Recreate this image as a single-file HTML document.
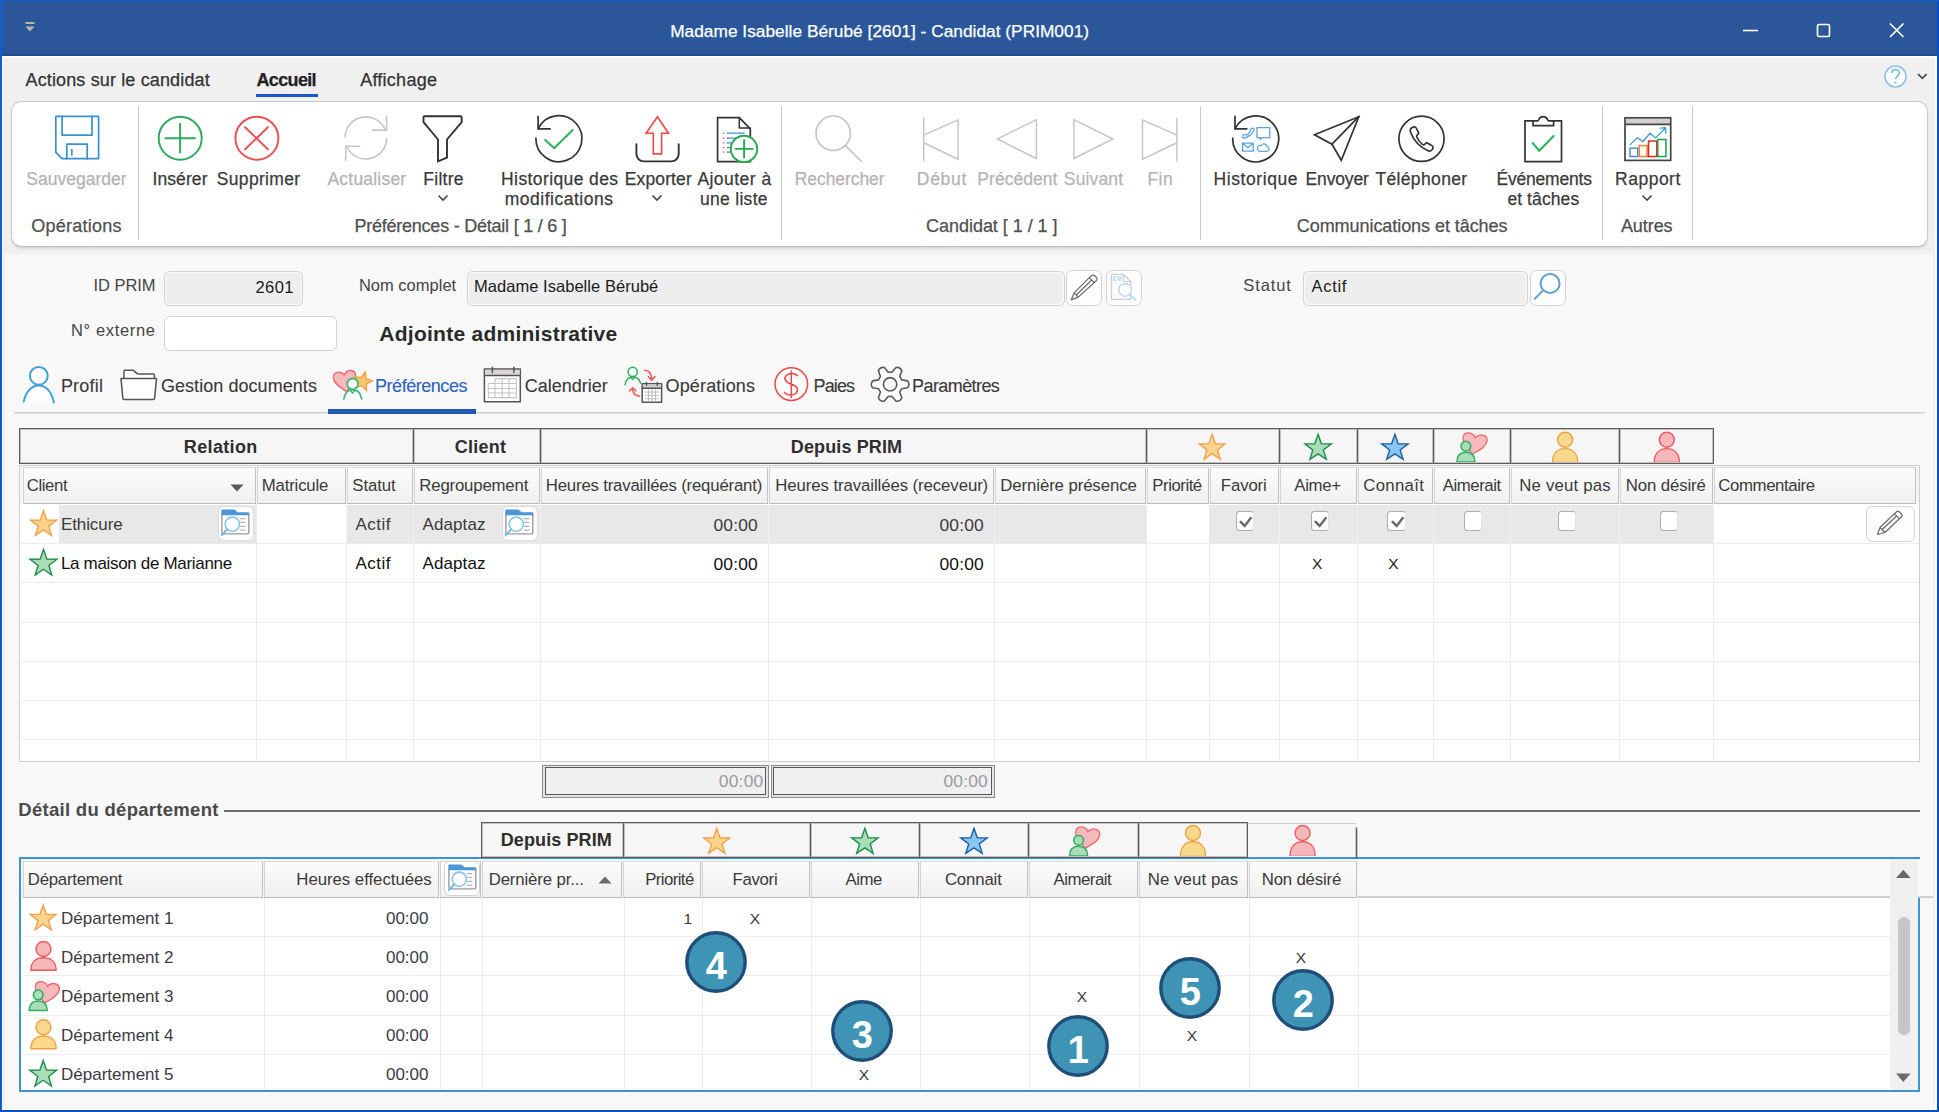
<!DOCTYPE html>
<html lang="fr">
<head>
<meta charset="utf-8">
<title>Madame Isabelle Bérubé [2601] - Candidat (PRIM001)</title>
<style>
*{box-sizing:border-box;margin:0;padding:0}
html,body{width:1939px;height:1112px;overflow:hidden;background:#f8f8f8}
body{font-family:"Liberation Sans",sans-serif;color:#333;position:relative}
.a{position:absolute}
.t{position:absolute;white-space:nowrap;line-height:20px;height:20px}
.c{text-align:center}
.r{text-align:right}
/* window chrome */
#win{position:absolute;left:0;top:0;width:1939px;height:1112px;background:#f8f8f8}
#titlebar{position:absolute;left:0;top:0;width:1939px;height:56px;background:#2b579a;border-bottom:2px solid #1f4b8f}
#tabsbar{position:absolute;left:0;top:56px;width:1939px;height:198px;background:#f0f0f0;border-top:2px solid #fffefb}
#bl{position:absolute;left:0;top:0;width:1.500px;height:1112px;background:#0b5fce}
#br{position:absolute;left:1937px;top:0;width:2px;height:1112px;background:#0a50c6}
#bt{position:absolute;left:0;top:0;width:1939px;height:1px;background:#0b5fce}
#bb{position:absolute;left:0;top:1110px;width:1939px;height:2px;background:#0a50c6}
.cr{position:absolute;background:#fffdf7}
#title{left:559.500px;top:21.400px;width:640px;font-size:17.300px;color:#fff}
/* ribbon */
#ribbon{position:absolute;left:10.700px;top:101.300px;width:1917.200px;height:146px;background:#fff;border:1.500px solid #cbcbcb;border-bottom-color:#bfbfbf;border-radius:10.500px;box-shadow:0 1.500px 2px rgba(0,0,0,.10)}
.rt{font-size:18px;color:#333;top:69.500px;letter-spacing:.08px}
.sep{position:absolute;top:106px;width:1px;height:134px;background:#c9c9c9}
.bl{font-size:17.500px;color:#3a3a3a;top:168.700px;width:200px;margin-left:-100px}
.bl2{top:188.500px}
.rt,.bl,.gl,#title{-webkit-text-stroke:.25px currentColor}
.pt{-webkit-text-stroke:.12px currentColor}
.dis{color:#b4b4b4}
.gl{font-size:18px;color:#505050;top:216.400px;width:400px;margin-left:-200px}
/* form */
.fl{font-size:16.5px;color:#444}
.inp{position:absolute;height:35px;border:1.200px solid #d2d2d2;border-radius:5.500px;background:#eeeeee;box-shadow:inset 0 0 0 1.200px rgba(255,255,255,.7)}
.btn{position:absolute;width:36px;height:36px;border:1.200px solid #d2d2d2;border-radius:6.500px;background:#fdfdfd}
.ft{font-size:16.5px;color:#1a1a1a}
.pt{font-size:18px;color:#3a3a3a;top:375.500px;letter-spacing:.1px}
/* grid */
.gt{font-size:16.800px;color:#3a3a3a;letter-spacing:-.25px}
.gb{font-size:18px;font-weight:bold;color:#2e2e2e;letter-spacing:.1px}
.gc{font-size:17px;color:#1d1d1d;letter-spacing:-.2px}
.vl{position:absolute;width:1px;background:#ececec}
.hl{position:absolute;height:1px;background:#ececec}
.hc{position:absolute;border-right:1px solid #c9c9c9;border-left:1px solid #fff}
</style>
</head>
<body>
<div id="win">
<div id="titlebar"></div>
<div id="tabsbar"></div>
<div class="t c" id="title" style="top:21.400px;left:670.2px;width:auto;margin-left:0;text-align:left;letter-spacing:0.02px">Madame Isabelle Bérubé [2601] - Candidat (PRIM001)</div>
<svg class="a" style="left:24px;top:19px" width="12" height="16" viewBox="0 0 12 16"><rect x="1.5" y="3" width="9" height="2" fill="#b9b5ae"/><path d="M1.5 7.5h9L6 12.5z" fill="#b9b5ae"/></svg>
<svg class="a" style="left:1735px;top:18px" width="180" height="26" viewBox="0 0 180 26"><g stroke="#fff" stroke-width="1.6" fill="none"><path d="M8 12.5h15"/><rect x="82.5" y="6.5" width="12" height="12" rx="1.5"/><path d="M155 5.5l13.5 13.5M168.5 5.5L155 19"/></g></svg>
<div class="t rt" style="left:26px;left:25.5px;width:auto;margin-left:0;text-align:left;letter-spacing:0.14px">Actions sur le candidat</div>
<div class="t rt" style="left:258px;font-weight:bold;color:#222;left:256.5px;width:auto;margin-left:0;text-align:left;letter-spacing:-0.66px">Accueil</div>
<div class="a" style="left:256px;top:94px;width:62px;height:3px;background:#1857c4"></div>
<div class="t rt" style="left:360px;left:360.2px;width:auto;margin-left:0;text-align:left;letter-spacing:0.25px">Affichage</div>
<svg class="a" style="left:1880px;top:62px" width="56" height="30" viewBox="0 0 56 30"><circle cx="15.5" cy="14.5" r="10.5" fill="#fff" stroke="#8cc3e8" stroke-width="1.6"/><path d="M11.8 11.2c0-5 7.6-5 7.6-.4 0 3.2-3.8 3-3.8 6.4" fill="none" stroke="#6fb1e0" stroke-width="1.5"/><circle cx="15.6" cy="20.6" r="1" fill="#6fb1e0"/><path d="M38 12l4.3 4.3L46.600 12" fill="none" stroke="#444" stroke-width="1.7"/></svg>

<div id="ribbon"></div>
<div class="sep" style="left:138px"></div>
<div class="sep" style="left:781px"></div>
<div class="sep" style="left:1200px"></div>
<div class="sep" style="left:1602px"></div>
<div class="sep" style="left:1692px"></div>
<!-- labels -->
<div class="t c bl dis" style="left:76px;left:26.2px;width:auto;margin-left:0;text-align:left;letter-spacing:0.02px">Sauvegarder</div>
<div class="t c bl" style="left:180px;left:152.5px;width:auto;margin-left:0;text-align:left;letter-spacing:0.09px">Insérer</div>
<div class="t c bl" style="left:258px;left:216.8px;width:auto;margin-left:0;text-align:left;letter-spacing:0.32px">Supprimer</div>
<div class="t c bl dis" style="left:367px;left:327.5px;width:auto;margin-left:0;text-align:left;letter-spacing:0.20px">Actualiser</div>
<div class="t c bl" style="left:443px;left:423.3px;width:auto;margin-left:0;text-align:left;letter-spacing:0.27px">Filtre</div>
<div class="t c bl" style="left:559px;left:501.1px;width:auto;margin-left:0;text-align:left;letter-spacing:0.39px">Historique des</div>
<div class="t c bl bl2" style="left:559px;left:504.7px;width:auto;margin-left:0;text-align:left;letter-spacing:0.51px">modifications</div>
<div class="t c bl" style="left:658px;left:624.7px;width:auto;margin-left:0;text-align:left;letter-spacing:0.14px">Exporter</div>
<div class="t c bl" style="left:734px;left:697.4px;width:auto;margin-left:0;text-align:left;letter-spacing:0.46px">Ajouter à</div>
<div class="t c bl bl2" style="left:734px;left:699.9px;width:auto;margin-left:0;text-align:left;letter-spacing:0.31px">une liste</div>
<div class="t c bl dis" style="left:839px;left:794.8px;width:auto;margin-left:0;text-align:left;letter-spacing:-0.08px">Rechercher</div>
<div class="t c bl dis" style="left:941px;left:916.8px;width:auto;margin-left:0;text-align:left;letter-spacing:0.70px">Début</div>
<div class="t c bl dis" style="left:1017px;left:977.3px;width:auto;margin-left:0;text-align:left;letter-spacing:0.05px">Précédent</div>
<div class="t c bl dis" style="left:1092px;left:1063.8px;width:auto;margin-left:0;text-align:left;letter-spacing:0.16px">Suivant</div>
<div class="t c bl dis" style="left:1160px;left:1147.4px;width:auto;margin-left:0;text-align:left;letter-spacing:0.50px">Fin</div>
<div class="t c bl" style="left:1255px;left:1213.5px;width:auto;margin-left:0;text-align:left;letter-spacing:0.59px">Historique</div>
<div class="t c bl" style="left:1337px;left:1305.5px;width:auto;margin-left:0;text-align:left;letter-spacing:-0.13px">Envoyer</div>
<div class="t c bl" style="left:1421px;left:1375.4px;width:auto;margin-left:0;text-align:left;letter-spacing:0.36px">Téléphoner</div>
<div class="t c bl" style="left:1543px;left:1496.4px;width:auto;margin-left:0;text-align:left;letter-spacing:-0.18px">Événements</div>
<div class="t c bl bl2" style="left:1543px;left:1507.4px;width:auto;margin-left:0;text-align:left;letter-spacing:0.09px">et tâches</div>
<div class="t c bl" style="left:1647px;left:1615.0px;width:auto;margin-left:0;text-align:left;letter-spacing:0.51px">Rapport</div>
<!-- group labels -->
<div class="t c gl" style="left:76px;left:31.2px;width:auto;margin-left:0;text-align:left;letter-spacing:0.24px">Opérations</div>
<div class="t c gl" style="left:460px;left:354.4px;width:auto;margin-left:0;text-align:left;letter-spacing:-0.23px">Préférences - Détail [ 1 / 6 ]</div>
<div class="t c gl" style="left:991px;left:926.1px;width:auto;margin-left:0;text-align:left;letter-spacing:-0.04px">Candidat [ 1 / 1 ]</div>
<div class="t c gl" style="left:1401px;left:1296.8px;width:auto;margin-left:0;text-align:left;letter-spacing:-0.06px">Communications et tâches</div>
<div class="t c gl" style="left:1647px;left:1620.9px;width:auto;margin-left:0;text-align:left;letter-spacing:-0.06px">Autres</div>
<!-- chevrons -->
<svg class="a" style="left:436px;top:193px" width="14" height="10" viewBox="0 0 14 10"><path d="M2.5 2.5L7 7l4.500-4.500" fill="none" stroke="#444" stroke-width="1.6"/></svg>
<svg class="a" style="left:650px;top:193px" width="14" height="10" viewBox="0 0 14 10"><path d="M2.5 2.5L7 7l4.500-4.500" fill="none" stroke="#444" stroke-width="1.6"/></svg>
<svg class="a" style="left:1640px;top:193px" width="14" height="10" viewBox="0 0 14 10"><path d="M2.5 2.5L7 7l4.500-4.500" fill="none" stroke="#444" stroke-width="1.6"/></svg>
<svg class="a" style="left:0;top:108px" width="1939" height="60" viewBox="0 108 1939 60" fill="none" stroke-linecap="round" stroke-linejoin="round">
<!-- save -->
<g stroke="#3b8fd1" stroke-width="1.700"><path d="M55.800 116.300H98.600V158.700H62.100L55.800 152.400Z"/><path d="M62.100 116.300V135.200H92V116.300"/><path d="M66.800 158.700V144.200H87.200V158.700"/><path d="M71.800 149.600V155"/></g>
<!-- insert -->
<g stroke="#2fa85a" stroke-width="1.900"><circle cx="180.200" cy="138.200" r="21.500"/><path d="M165.400 138.200H194.900M180.100 123.800V152.500"/></g>
<!-- delete -->
<g stroke="#e85050" stroke-width="1.900"><circle cx="256.900" cy="138.200" r="21.500"/><path d="M245.100 127.200L267.900 149.300M267.900 127.200L245.100 149.300"/></g>
<!-- refresh -->
<g stroke="#c6c6c6" stroke-width="1.600"><path d="M345 136.700A20.900 20.900 0 0 1 385.400 130.300"/><path d="M386.600 116V130.100H372.500"/><path d="M386.700 138.900A20.900 20.900 0 0 1 346.500 146"/><path d="M345.700 160.300V146.200H359.800"/></g>
<!-- filter -->
<g stroke="#333" stroke-width="1.900" stroke-linecap="butt" stroke-linejoin="miter"><path d="M424.500 116.300H460.700Q461.700 116.300 461.700 117.300V122.100L447 139.500V157.600L438 161.400V139.500L423.500 122.100V117.300Q423.500 116.300 424.500 116.300Z"/></g>
<!-- history check -->
<g stroke="#333" stroke-width="1.700"><path d="M538.100 128.800A23 23 0 1 1 535.900 138.200"/><path d="M538.100 116.300V128.800H550.200"/></g>
<path d="M545.200 139.900L554.200 148.200L572.600 130.100" stroke="#2db55d" stroke-width="2.100"/>
<!-- export -->
<path d="M636.400 144.200V154A7.400 7.400 0 0 0 643.800 161.400H671.300A7.400 7.400 0 0 0 678.700 154V144.200" stroke="#333" stroke-width="1.900"/>
<path d="M657.500 116.700L668.500 133.200H661.600V153.900H653.300V133.200H646.100Z" stroke="#f04848" stroke-width="1.600" stroke-linejoin="miter"/>
<!-- add to list -->
<path d="M717.600 117.700H739.300L750.300 128.800V161.600H717.600Z" stroke="#333" stroke-width="1.700" stroke-linejoin="miter"/>
<path d="M739.300 117.700V128.100H750.300" stroke="#333" stroke-width="1.500"/>
<g stroke="#3b8fd1" stroke-width="1.200" stroke-linecap="butt"><path d="M726.600 133.200H744.700M726.600 138.200H744.700M726.600 142.900H744.700M726.600 147.600H744.700M726.600 152.200H744.700"/></g>
<g stroke="#f04848" stroke-width="1.300" stroke-linecap="butt"><path d="M722.800 133.200h1.500M722.800 138.200h1.500M722.800 142.900h1.500M722.800 147.600h1.500M722.800 152.200h1.500"/></g>
<circle cx="744" cy="148.900" r="13.200" fill="#fff" stroke="#27a84f" stroke-width="1.900"/>
<path d="M735.600 148.900H752.700M744.100 140.200V157.600" stroke="#27a84f" stroke-width="1.900"/>
<!-- search -->
<g stroke="#c6c6c6" stroke-width="1.700"><circle cx="833.200" cy="133.200" r="17.200"/><path d="M845.900 146.200L861.300 161.400"/></g>
<!-- nav -->
<g stroke="#c6c6c6" stroke-width="1.500" stroke-linecap="butt" stroke-linejoin="miter">
<path d="M923.700 117.800V161.400M923.700 135.100L958.100 119.800V159.300L923.700 142.700"/>
<path d="M997.400 139L1036.400 119.600V158.500Z"/>
<path d="M1112.900 139L1073.900 119.600V158.500Z"/>
<path d="M1176.900 117.800V161.400M1176.900 135.100L1142.500 119.800V159.300L1176.900 142.700"/>
</g>
<!-- historique -->
<g stroke="#333" stroke-width="1.700"><path d="M1235 128.800A23 23 0 1 1 1232.700 138.200"/><path d="M1235 116.300V128.800H1246.800"/></g>
<g stroke="#5aa5dc" stroke-width="1.300"><path d="M1257 127.600H1269.800V137.600H1262.200L1260.200 139.600V137.600H1257Z"/><path d="M1242.600 143.200H1253.200V151.200H1242.600ZM1242.600 143.200L1247.900 147.800L1253.200 143.200"/><path d="M1259.600 151.400H1266.800A2.500 2.500 0 0 0 1267.200 146.500A3.300 3.300 0 0 0 1261.200 145.500A3 3 0 0 0 1259.600 151.400Z"/><path d="M1252 128.300Q1254.500 127.600 1254 130Q1251.500 135 1247 137.200Q1243 139.200 1242.400 136.500Q1242.400 134.400 1245 134.400Q1246.200 135.600 1247.500 134.500Q1250 132.600 1250.500 130Q1250.500 128.800 1252 128.300Z"/></g>
<!-- envoyer -->
<g stroke="#333" stroke-width="1.700" stroke-linejoin="miter"><path d="M1314.500 134.800L1358.800 116.700L1341.300 160.300L1332 144.200Z"/><path d="M1332 144.200L1358.800 116.700"/></g>
<!-- telephoner -->
<g stroke="#333" stroke-width="1.700"><circle cx="1421.500" cy="138.800" r="22.600"/><path d="M1412.200 127.400C1410.200 128.400 1409.800 130.200 1410.800 132.800C1413.800 140.600 1419.600 146.800 1427.600 150.600C1429.600 151.600 1431.200 151.200 1432.400 149.400C1433.600 147.600 1433.200 146.400 1431.600 145.400L1428.200 143.400C1426.800 142.600 1425.800 143 1425 144C1424.200 145 1423.400 145.200 1422.400 144.400C1419.800 142.200 1418 139.800 1416.800 137C1416.400 136 1416.800 135.200 1417.600 134.600C1418.600 134 1418.800 133 1418.200 131.800L1416.400 128.400C1415.600 126.800 1414 126.400 1412.200 127.400Z"/></g>
<!-- evenements -->
<g stroke="#333" stroke-width="1.700" stroke-linejoin="miter"><path d="M1533 120.900H1525V161.600H1561.500V120.900H1553.600"/><path d="M1533 120.900V125.700H1553.600V120.900H1549Q1548 120.900 1547.600 119.800A4.700 4.700 0 0 0 1538.700 119.800Q1538.300 120.900 1537.300 120.900Z"/></g>
<path d="M1532.800 143.100L1539.200 150.800L1553.600 136.100" stroke="#2db55d" stroke-width="2.200"/>
<!-- rapport -->
<rect x="1625.800" y="118.600" width="44" height="5.700" fill="#d3cfcb" stroke="none"/>
<g stroke="#444" stroke-width="1.700" stroke-linejoin="miter" stroke-linecap="butt"><rect x="1625" y="117.800" width="45.700" height="42.600"/><path d="M1625 124.300H1670.700"/></g>
<g stroke-width="1.500" stroke-linejoin="miter"><rect x="1630" y="148.200" width="7.700" height="8.300" stroke="#4a90d9"/><rect x="1639.200" y="145.600" width="7.800" height="10.900" stroke="#f08030"/><rect x="1648.500" y="141" width="8.300" height="15.500" stroke="#e82525"/><rect x="1657.800" y="139.500" width="8.200" height="17" stroke="#20a050"/></g>
<path d="M1630.200 144.600L1637.200 137.900L1642.900 141.500L1650.100 133.300L1655.800 137.900L1665.600 127.600M1660.400 128.200L1665.600 127.600L1665.800 133" stroke="#3a9ad9" stroke-width="1.300"/>
</svg>


<div class="t r fl" style="left:55px;width:100px;top:275px;left:93.4px;width:auto;margin-left:0;text-align:left;letter-spacing:-0.02px">ID PRIM</div>
<div class="inp" style="left:164px;top:271px;width:139px"></div>
<div class="t r ft" style="left:200px;width:93px;top:277px;left:255.6px;width:auto;margin-left:0;text-align:left;letter-spacing:0.34px">2601</div>
<div class="t fl" style="left:359px;top:275px;left:358.9px;width:auto;margin-left:0;text-align:left;letter-spacing:0.01px">Nom complet</div>
<div class="inp" style="left:467px;top:271px;width:598px"></div>
<div class="t ft" style="left:475px;top:276px;left:474.0px;width:auto;margin-left:0;text-align:left;letter-spacing:0.04px">Madame Isabelle Bérubé</div>
<div class="btn" style="left:1066px;top:270px"></div>
<div class="btn" style="left:1106px;top:270px"></div>
<div class="t fl" style="left:1244px;top:275px;left:1243.3px;width:auto;margin-left:0;text-align:left;letter-spacing:0.88px">Statut</div>
<div class="inp" style="left:1303px;top:271px;width:225px"></div>
<div class="t ft" style="left:1311.500px;top:276px;letter-spacing:.7px">Actif</div>
<div class="btn" style="left:1530px;top:270px"></div>
<div class="t r fl" style="left:35px;width:120px;top:320px;left:71.0px;width:auto;margin-left:0;text-align:left;letter-spacing:0.65px">N° externe</div>
<div class="inp" style="left:164px;top:316px;width:173px;background:#fff"></div>
<div class="t" style="left:379.500px;top:321.500px;font-size:21px;font-weight:bold;color:#2a2a2a;line-height:24px;height:24px;left:379.3px;width:auto;margin-left:0;text-align:left;letter-spacing:0.26px">Adjointe administrative</div>
<!-- page tabs -->
<div class="t pt" style="left:61px;left:60.9px;width:auto;margin-left:0;text-align:left;letter-spacing:0.21px">Profil</div>
<div class="t pt" style="left:161px;left:160.9px;width:auto;margin-left:0;text-align:left;letter-spacing:0.06px">Gestion documents</div>
<div class="t pt" style="left:375px;color:#2b62c4;left:375.0px;width:auto;margin-left:0;text-align:left;letter-spacing:-0.46px">Préférences</div>
<div class="t pt" style="left:525px;left:524.7px;width:auto;margin-left:0;text-align:left;letter-spacing:-0.01px">Calendrier</div>
<div class="t pt" style="left:666px;left:665.5px;width:auto;margin-left:0;text-align:left;letter-spacing:0.16px">Opérations</div>
<div class="t pt" style="left:814px;left:813.5px;width:auto;margin-left:0;text-align:left;letter-spacing:-0.87px">Paies</div>
<div class="t pt" style="left:912px;left:912.1px;width:auto;margin-left:0;text-align:left;letter-spacing:-0.59px">Paramètres</div>
<div class="a" style="left:14px;top:412px;width:1911px;height:2px;background:linear-gradient(#d0d0d0,#d0d0d0 50%,#e4e4e4 50%)"></div>
<div class="a" style="left:328px;top:409px;width:148px;height:5px;background:#2258b0"></div>
<!-- pencil button icon -->
<svg class="a" style="left:1068px;top:272px" width="34" height="32" viewBox="1068 272 34 32" fill="none" stroke="#6a6a6a" stroke-width="1.200" stroke-linejoin="round"><path d="M1071.200 299.900L1074.100 292.900L1091.100 275.900Q1093.200 274.300 1095 276L1096.600 277.600Q1097.800 279.200 1096.300 280.800L1078.200 297.100Z"/><path d="M1074.100 292.900L1078.200 297.100M1089.300 277.700L1094.500 282.700M1076.200 295L1092 279.800"/></svg>
<!-- cv search (disabled) -->
<svg class="a" style="left:1108px;top:272px" width="32" height="32" viewBox="1108 272 32 32" fill="none"><path d="M1111.500 274.400H1123.500L1130.600 281.500V299.400H1111.500Z" stroke="#cfcfcf" stroke-width="1.400" fill="#fdfdfd"/><path d="M1123.500 274.400V281.500H1130.600" stroke="#cfcfcf" stroke-width="1.200"/><text x="1112.500" y="281.200" font-family="Liberation Sans" font-size="8.500" font-weight="bold" fill="#b5d9f2">cv</text><circle cx="1125.100" cy="289.800" r="6.400" fill="#fdfdfd" stroke="#b9dbf3" stroke-width="1.500"/><path d="M1129.700 294.400L1135.500 300.200" stroke="#b9dbf3" stroke-width="1.700" stroke-linecap="round"/></svg>
<!-- statut search -->
<svg class="a" style="left:1531px;top:272px" width="34" height="32" viewBox="1531 272 34 32" fill="none" stroke="#5f9fd4" stroke-width="2" stroke-linecap="round"><circle cx="1550.100" cy="283.400" r="9.500"/><path d="M1543.200 290.300L1534.600 298.900"/></svg>
<!-- tab icons -->
<svg class="a" style="left:18px;top:362px" width="1000" height="46" viewBox="18 362 1000 46" fill="none" stroke-linecap="round" stroke-linejoin="round">
<!-- profil -->
<path d="M23.700 401.500C26 391 32 385.400 38.800 385.400C45.600 385.400 51.600 391 53.800 402.500" fill="#fff" stroke="#45a0d8" stroke-width="2"/>
<circle cx="38.800" cy="375.800" r="8.900" fill="#fff" stroke="#45a0d8" stroke-width="2"/>
<!-- folder -->
<path d="M123.900 378.600V371.300Q123.900 370.300 124.900 370.300H132.600Q133.400 370.300 134 370.900L136.800 373.400Q137.500 374 138.400 374H153.400Q154.400 374 154.400 375V378.600" fill="#fff" stroke="#555" stroke-width="1.500"/>
<path d="M121 378.600H156.500L154.600 398.400Q154.500 399.400 153.500 399.400H124Q123 399.400 122.900 398.400Z" fill="#fff" stroke="#555" stroke-width="1.500"/>
<!-- calendar -->
<rect x="484.400" y="369.100" width="35.900" height="32.700" fill="#fff" stroke="#555" stroke-width="1.500"/>
<rect x="485.200" y="369.900" width="34.300" height="5.600" fill="#d9d6d3" stroke="none"/>
<path d="M484.400 375.500H520.300" stroke="#555" stroke-width="1.500"/>
<path d="M492.400 367.200V372.400M513.900 367.200V372.400" stroke="#555" stroke-width="1.500"/>
<path d="M495 378.600H516.400V397.600H488.300V383.500H516.400M488.300 388.500H516.400M488.300 393H516.400M495 378.600V397.600M502.200 378.600V397.600M509 378.600V397.600" stroke="#c4c4c4" stroke-width="1.100"/>
<!-- operations -->
<path d="M625 384.800C626 379.500 629 377 632.700 377C636.400 377 639.500 379 640.500 383.200" stroke="#2fae60" stroke-width="1.500"/>
<circle cx="632.700" cy="371.900" r="4.600" stroke="#2fae60" stroke-width="1.500" fill="#fafafa"/>
<path d="M630.700 377.300L632.700 379.600L634.700 377.300" stroke="#2fae60" stroke-width="1.200"/>
<path d="M644.600 370.300Q651.500 370.500 651.600 379.400M648.400 376.800L651.700 380.100L654.800 376.600" stroke="#f05a5a" stroke-width="1.600"/>
<path d="M639.600 396.100Q632.700 396 632.700 388.200M629.400 391L632.700 387.700L636 391" stroke="#f05a5a" stroke-width="1.600"/>
<rect x="642.200" y="383.700" width="19.400" height="18.600" fill="#fff" stroke="#555" stroke-width="1.500"/>
<rect x="643" y="384.400" width="17.800" height="3.800" fill="#d0d0d0" stroke="none"/>
<path d="M642.200 388.200H661.600M646.500 382.400V385.400M657.300 382.400V385.400" stroke="#555" stroke-width="1.400"/>
<path d="M645 392H659M645 395.400H659M645 398.800H659M648.500 390V400.500M652 390V400.500M655.500 390V400.500" stroke="#bdbdbd" stroke-width="1"/>
<!-- paies -->
<circle cx="791.300" cy="384.100" r="16.300" fill="#fff" stroke="#f04848" stroke-width="1.500"/>
<path d="M797.400 375.800C795.500 373.600 790 372.300 786.600 375.200C783.200 378.300 785.200 382.200 791 384C797 385.800 799.400 389.600 796 393.200C792.800 396.200 787 395.400 784.400 392.400M791.300 371V397.400" stroke="#f04848" stroke-width="1.500"/>
<!-- gear -->
<circle cx="890.100" cy="384.300" r="6.700" stroke="#5a5a5a" stroke-width="1.600"/>
<path id="gearp" stroke="#5a5a5a" stroke-width="1.600" fill="#fff" d="M901.6 379.9L907.6 380.9A5.5 5.5 0 0 1 907.6 387.7L901.6 388.7A12.3 12.3 0 0 1 899.7 392.0L901.8 397.7A5.5 5.5 0 0 1 895.9 401.1L892.0 396.4A12.3 12.3 0 0 1 888.2 396.4L884.3 401.1A5.5 5.5 0 0 1 878.4 397.7L880.5 392.0A12.3 12.3 0 0 1 878.6 388.7L872.6 387.7A5.5 5.5 0 0 1 872.6 380.9L878.6 379.9A12.3 12.3 0 0 1 880.5 376.6L878.4 370.9A5.5 5.5 0 0 1 884.3 367.5L888.2 372.2A12.3 12.3 0 0 1 892.0 372.2L895.9 367.5A5.5 5.5 0 0 1 901.8 370.9L899.7 376.6A12.3 12.3 0 0 1 901.6 379.9 Z"/>
<circle cx="890.100" cy="384.300" r="6.700" stroke="#5a5a5a" stroke-width="1.600" fill="#f8f8f8"/>
<!-- preferences -->
</svg>
<svg class="a" style="left:330px;top:366px" width="46" height="36" viewBox="330 366 46 36" fill="none"><path d="M345.1 375C342.4 369.9 334.3 369.9 333.9 376.3C333.9 382.8 340.2 387.1 345.1 391.8C350.1 387.1 356.4 382.8 356.4 376.3C355.9 369.9 347.8 369.9 345.1 375Z" fill="#f6b9bc" stroke="#ea6a70" stroke-width="1.4" transform="rotate(-8 345.1 381.1)"/><path d="M362.8 371.8L365.4 378L372.1 378.6L367 383L368.6 389.5L362.8 386L357 389.5L358.6 383L353.5 378.6L360.2 378Z" fill="#f9c66e" stroke="#f09a3a" stroke-width="1.2" stroke-linejoin="miter" transform="rotate(14 362.800 381.600)"/><path d="M343.800 398.800C345 392 348.500 389.800 352.600 389.800C356.800 389.800 360.500 392 361.700 398.800" stroke="#3cb878" stroke-width="1.700" fill="#fafafa" stroke-linecap="round"/><circle cx="352.600" cy="383.900" r="5.400" fill="#fff" stroke="#3cb878" stroke-width="1.800"/><path d="M350.300 390.300L352.600 393.200L354.900 390.300" stroke="#3cb878" stroke-width="1.300"/></svg>


<div class="a" style="left:19px;top:429px;width:1695px;height:35.5px;background:#f6f6f6"></div>
<div class="a" style="left:19px;top:428px;width:395px;height:36px;border:1px solid #5c5c5c;box-shadow:inset 0 0 0 1px rgba(92,92,92,.34)"></div>
<div class="t c gb" style="left:19px;width:394px;top:436.800px;left:183.8px;width:auto;margin-left:0;text-align:left;letter-spacing:0.36px">Relation</div>
<div class="a" style="left:413px;top:428px;width:128px;height:36px;border:1px solid #5c5c5c;box-shadow:inset 0 0 0 1px rgba(92,92,92,.34)"></div>
<div class="t c gb" style="left:413px;width:127px;top:436.800px;left:454.8px;width:auto;margin-left:0;text-align:left;letter-spacing:0.23px">Client</div>
<div class="a" style="left:540px;top:428px;width:607px;height:36px;border:1px solid #5c5c5c;box-shadow:inset 0 0 0 1px rgba(92,92,92,.34)"></div>
<div class="t c gb" style="left:540px;width:606px;top:436.800px;left:790.8px;width:auto;margin-left:0;text-align:left;letter-spacing:0.13px">Depuis PRIM</div>
<div class="a" style="left:1146px;top:428px;width:134px;height:36px;border:1px solid #5c5c5c;box-shadow:inset 0 0 0 1px rgba(92,92,92,.34)"></div>
<div class="a" style="left:1279px;top:428px;width:79px;height:36px;border:1px solid #5c5c5c;box-shadow:inset 0 0 0 1px rgba(92,92,92,.34)"></div>
<div class="a" style="left:1357px;top:428px;width:77px;height:36px;border:1px solid #5c5c5c;box-shadow:inset 0 0 0 1px rgba(92,92,92,.34)"></div>
<div class="a" style="left:1433px;top:428px;width:78px;height:36px;border:1px solid #5c5c5c;box-shadow:inset 0 0 0 1px rgba(92,92,92,.34)"></div>
<div class="a" style="left:1510px;top:428px;width:110px;height:36px;border:1px solid #5c5c5c;box-shadow:inset 0 0 0 1px rgba(92,92,92,.34)"></div>
<div class="a" style="left:1619px;top:428px;width:95px;height:36px;border:1px solid #5c5c5c;box-shadow:inset 0 0 0 1px rgba(92,92,92,.34)"></div>
<div class="a" style="left:19px;top:464.500px;width:1901px;height:297.500px;border:1px solid #cfcfcf;background:#fff"></div>
<div class="a" style="left:20px;top:465.500px;width:1899px;height:38.500px;background:#f5f5f5"></div>
<div class="a" style="left:23px;top:467px;width:233px;height:37px;background:linear-gradient(#fcfcfc,#f0f0f0);border:1px solid #c2c2c2;border-left-color:#d4d4d4;border-top-color:#dadada;border-bottom-color:#bababa"></div>
<div class="t gt" style="left:27px;top:475.600px;left:26.8px;width:auto;margin-left:0;text-align:left;letter-spacing:-0.42px">Client</div>
<div class="a" style="left:257px;top:467px;width:89px;height:37px;background:linear-gradient(#fcfcfc,#f0f0f0);border:1px solid #c2c2c2;border-left-color:#d4d4d4;border-top-color:#dadada;border-bottom-color:#bababa"></div>
<div class="t gt" style="left:261px;top:475.600px;left:261.8px;width:auto;margin-left:0;text-align:left;letter-spacing:-0.19px">Matricule</div>
<div class="a" style="left:347px;top:467px;width:66px;height:37px;background:linear-gradient(#fcfcfc,#f0f0f0);border:1px solid #c2c2c2;border-left-color:#d4d4d4;border-top-color:#dadada;border-bottom-color:#bababa"></div>
<div class="t gt" style="left:351px;top:475.600px;left:352.3px;width:auto;margin-left:0;text-align:left;letter-spacing:-0.08px">Statut</div>
<div class="a" style="left:414px;top:467px;width:126px;height:37px;background:linear-gradient(#fcfcfc,#f0f0f0);border:1px solid #c2c2c2;border-left-color:#d4d4d4;border-top-color:#dadada;border-bottom-color:#bababa"></div>
<div class="t gt" style="left:418px;top:475.600px;left:419.3px;width:auto;margin-left:0;text-align:left;letter-spacing:-0.18px">Regroupement</div>
<div class="a" style="left:541px;top:467px;width:227px;height:37px;background:linear-gradient(#fcfcfc,#f0f0f0);border:1px solid #c2c2c2;border-left-color:#d4d4d4;border-top-color:#dadada;border-bottom-color:#bababa"></div>
<div class="t gt" style="left:545px;top:475.600px;left:545.8px;width:auto;margin-left:0;text-align:left;letter-spacing:-0.19px">Heures travaillées (requérant)</div>
<div class="a" style="left:769px;top:467px;width:225px;height:37px;background:linear-gradient(#fcfcfc,#f0f0f0);border:1px solid #c2c2c2;border-left-color:#d4d4d4;border-top-color:#dadada;border-bottom-color:#bababa"></div>
<div class="t gt" style="left:773px;top:475.600px;left:775.3px;width:auto;margin-left:0;text-align:left;letter-spacing:-0.09px">Heures travaillées (receveur)</div>
<div class="a" style="left:995px;top:467px;width:151px;height:37px;background:linear-gradient(#fcfcfc,#f0f0f0);border:1px solid #c2c2c2;border-left-color:#d4d4d4;border-top-color:#dadada;border-bottom-color:#bababa"></div>
<div class="t gt" style="left:999px;top:475.600px;left:1000.3px;width:auto;margin-left:0;text-align:left;letter-spacing:-0.10px">Dernière présence</div>
<div class="a" style="left:1147px;top:467px;width:62px;height:37px;background:linear-gradient(#fcfcfc,#f0f0f0);border:1px solid #c2c2c2;border-left-color:#d4d4d4;border-top-color:#dadada;border-bottom-color:#bababa"></div>
<div class="t gt" style="left:1151px;top:475.600px;left:1152.3px;width:auto;margin-left:0;text-align:left;letter-spacing:-0.47px">Priorité</div>
<div class="a" style="left:1210px;top:467px;width:69px;height:37px;background:linear-gradient(#fcfcfc,#f0f0f0);border:1px solid #c2c2c2;border-left-color:#d4d4d4;border-top-color:#dadada;border-bottom-color:#bababa"></div>
<div class="t c gt" style="left:1209px;width:70px;top:475.600px;left:1220.8px;width:auto;margin-left:0;text-align:left;letter-spacing:-0.12px">Favori</div>
<div class="a" style="left:1280px;top:467px;width:77px;height:37px;background:linear-gradient(#fcfcfc,#f0f0f0);border:1px solid #c2c2c2;border-left-color:#d4d4d4;border-top-color:#dadada;border-bottom-color:#bababa"></div>
<div class="t c gt" style="left:1279px;width:78px;top:475.600px;left:1294.3px;width:auto;margin-left:0;text-align:left;letter-spacing:-0.33px">Aime+</div>
<div class="a" style="left:1358px;top:467px;width:75px;height:37px;background:linear-gradient(#fcfcfc,#f0f0f0);border:1px solid #c2c2c2;border-left-color:#d4d4d4;border-top-color:#dadada;border-bottom-color:#bababa"></div>
<div class="t c gt" style="left:1357px;width:76px;top:475.600px;left:1363.3px;width:auto;margin-left:0;text-align:left;letter-spacing:0.30px">Connaît</div>
<div class="a" style="left:1434px;top:467px;width:76px;height:37px;background:linear-gradient(#fcfcfc,#f0f0f0);border:1px solid #c2c2c2;border-left-color:#d4d4d4;border-top-color:#dadada;border-bottom-color:#bababa"></div>
<div class="t c gt" style="left:1433px;width:77px;top:475.600px;left:1442.8px;width:auto;margin-left:0;text-align:left;letter-spacing:-0.46px">Aimerait</div>
<div class="a" style="left:1511px;top:467px;width:108px;height:37px;background:linear-gradient(#fcfcfc,#f0f0f0);border:1px solid #c2c2c2;border-left-color:#d4d4d4;border-top-color:#dadada;border-bottom-color:#bababa"></div>
<div class="t c gt" style="left:1510px;width:109px;top:475.600px;left:1519.3px;width:auto;margin-left:0;text-align:left;letter-spacing:0.17px">Ne veut pas</div>
<div class="a" style="left:1620px;top:467px;width:93px;height:37px;background:linear-gradient(#fcfcfc,#f0f0f0);border:1px solid #c2c2c2;border-left-color:#d4d4d4;border-top-color:#dadada;border-bottom-color:#bababa"></div>
<div class="t c gt" style="left:1619px;width:94px;top:475.600px;left:1625.8px;width:auto;margin-left:0;text-align:left;letter-spacing:-0.13px">Non désiré</div>
<div class="a" style="left:1714px;top:467px;width:202px;height:37px;background:linear-gradient(#fcfcfc,#f0f0f0);border:1px solid #c2c2c2;border-left-color:#d4d4d4;border-top-color:#dadada;border-bottom-color:#bababa"></div>
<div class="t gt" style="left:1718px;top:475.600px;left:1718.3px;width:auto;margin-left:0;text-align:left;letter-spacing:-0.39px">Commentaire</div>
<svg class="a" style="left:230px;top:483.500px" width="14" height="8" viewBox="0 0 14 8"><path d="M0.500 0.500h13L7 7.500z" fill="#5a5a5a"/></svg>
<div class="a" style="left:59px;top:504.500px;width:1654px;height:38px;background:#e8e8e8"></div>
<div class="a" style="left:257px;top:504.500px;width:89px;height:38px;background:#fff"></div>
<div class="a" style="left:1147px;top:504.500px;width:62px;height:38px;background:#fff"></div>
<div class="hl" style="left:20px;top:542.5px;width:1899px"></div>
<div class="hl" style="left:20px;top:581.5px;width:1899px"></div>
<div class="hl" style="left:20px;top:621.5px;width:1899px"></div>
<div class="hl" style="left:20px;top:661px;width:1899px"></div>
<div class="hl" style="left:20px;top:700px;width:1899px"></div>
<div class="hl" style="left:20px;top:739px;width:1899px"></div>
<div class="vl" style="left:256.3px;top:504.500px;height:256.500px"></div>
<div class="vl" style="left:346.3px;top:504.500px;height:256.500px"></div>
<div class="vl" style="left:413.3px;top:504.500px;height:256.500px"></div>
<div class="vl" style="left:540.3px;top:504.500px;height:256.500px"></div>
<div class="vl" style="left:768.3px;top:504.500px;height:256.500px"></div>
<div class="vl" style="left:994.3px;top:504.500px;height:256.500px"></div>
<div class="vl" style="left:1146.3px;top:504.500px;height:256.500px"></div>
<div class="vl" style="left:1209.3px;top:504.500px;height:256.500px"></div>
<div class="vl" style="left:1279.3px;top:504.500px;height:256.500px"></div>
<div class="vl" style="left:1357.3px;top:504.500px;height:256.500px"></div>
<div class="vl" style="left:1433.3px;top:504.500px;height:256.500px"></div>
<div class="vl" style="left:1510.3px;top:504.500px;height:256.500px"></div>
<div class="vl" style="left:1619.3px;top:504.500px;height:256.500px"></div>
<div class="vl" style="left:1713.3px;top:504.500px;height:256.500px"></div>
<div class="a" style="left:346.3px;top:504.500px;width:1px;height:38px;background:#f1f1f1"></div>
<div class="a" style="left:413.3px;top:504.500px;width:1px;height:38px;background:#f1f1f1"></div>
<div class="a" style="left:540.3px;top:504.500px;width:1px;height:38px;background:#f1f1f1"></div>
<div class="a" style="left:768.3px;top:504.500px;width:1px;height:38px;background:#f1f1f1"></div>
<div class="a" style="left:994.3px;top:504.500px;width:1px;height:38px;background:#f1f1f1"></div>
<div class="a" style="left:1279.3px;top:504.500px;width:1px;height:38px;background:#f1f1f1"></div>
<div class="a" style="left:1357.3px;top:504.500px;width:1px;height:38px;background:#f1f1f1"></div>
<div class="a" style="left:1433.3px;top:504.500px;width:1px;height:38px;background:#f1f1f1"></div>
<div class="a" style="left:1510.3px;top:504.500px;width:1px;height:38px;background:#f1f1f1"></div>
<div class="a" style="left:1619.3px;top:504.500px;width:1px;height:38px;background:#f1f1f1"></div>
<div class="t gc" style="left:61px;top:515.1px;color:#3a3a3a;left:60.9px;width:auto;margin-left:0;text-align:left;letter-spacing:-0.08px">Ethicure</div>
<div class="t gc" style="left:355.500px;top:515.1px;color:#3a3a3a;letter-spacing:.5px">Actif</div>
<div class="t gc" style="left:422.500px;top:515.1px;color:#3a3a3a;letter-spacing:.1px">Adaptaz</div>
<div class="t r gc" style="left:658px;width:100px;top:515.1px;color:#3a3a3a;font-size:17.400px;letter-spacing:.2px">00:00</div>
<div class="t r gc" style="left:884px;width:100px;top:515.1px;color:#3a3a3a;font-size:17.400px;letter-spacing:.2px">00:00</div>
<div class="t gc" style="left:61px;top:554.2px;color:#111;left:60.9px;width:auto;margin-left:0;text-align:left;letter-spacing:-0.32px">La maison de Marianne</div>
<div class="t gc" style="left:355.500px;top:554.2px;color:#111;letter-spacing:.5px">Actif</div>
<div class="t gc" style="left:422.500px;top:554.2px;color:#111;letter-spacing:.1px">Adaptaz</div>
<div class="t r gc" style="left:658px;width:100px;top:554.2px;color:#111;font-size:17.400px;letter-spacing:.2px">00:00</div>
<div class="t r gc" style="left:884px;width:100px;top:554.2px;color:#111;font-size:17.400px;letter-spacing:.2px">00:00</div>
<div class="t c gc" style="left:1297.200px;width:40px;top:554.100px;font-size:15.500px;letter-spacing:0">X</div>
<div class="t c gc" style="left:1373.400px;width:40px;top:554.100px;font-size:15.500px;letter-spacing:0">X</div>
<div class="a" style="left:1235.8px;top:511.200px;width:18.500px;height:19.600px;border:1.200px solid #adadad;border-right-color:#e2e2e2;border-radius:3.500px;background:#fff"></div>
<svg class="a" style="left:1235.0px;top:511px" width="20" height="20" viewBox="0 0 20 20"><path d="M4.900 10.200l4.700 4.700L16.400 6.300" fill="none" stroke="#6a6a6a" stroke-width="2.400"/></svg>
<div class="a" style="left:1310.7px;top:511.200px;width:18.500px;height:19.600px;border:1.200px solid #adadad;border-right-color:#e2e2e2;border-radius:3.500px;background:#fff"></div>
<svg class="a" style="left:1309.9px;top:511px" width="20" height="20" viewBox="0 0 20 20"><path d="M4.900 10.200l4.700 4.700L16.400 6.300" fill="none" stroke="#6a6a6a" stroke-width="2.400"/></svg>
<div class="a" style="left:1387.3px;top:511.200px;width:18.500px;height:19.600px;border:1.200px solid #adadad;border-right-color:#e2e2e2;border-radius:3.500px;background:#fff"></div>
<svg class="a" style="left:1386.5px;top:511px" width="20" height="20" viewBox="0 0 20 20"><path d="M4.900 10.200l4.700 4.700L16.400 6.300" fill="none" stroke="#6a6a6a" stroke-width="2.400"/></svg>
<div class="a" style="left:1463.9px;top:511.200px;width:18.500px;height:19.600px;border:1.200px solid #adadad;border-right-color:#e2e2e2;border-radius:3.500px;background:#fff"></div>
<div class="a" style="left:1557.6px;top:511.200px;width:18.500px;height:19.600px;border:1.200px solid #adadad;border-right-color:#e2e2e2;border-radius:3.500px;background:#fff"></div>
<div class="a" style="left:1659.5px;top:511.200px;width:18.500px;height:19.600px;border:1.200px solid #adadad;border-right-color:#e2e2e2;border-radius:3.500px;background:#fff"></div>
<div class="a" style="left:218px;top:505.500px;width:36px;height:35.500px;border:1px solid #dcdcdc;border-radius:6px;background:#fdfdfd"></div>
<div class="a" style="left:502px;top:505.500px;width:36px;height:35.500px;border:1px solid #dcdcdc;border-radius:6px;background:#fdfdfd"></div>
<div class="a" style="left:1866px;top:505.500px;width:49px;height:36px;border:1px solid #d6d6d6;border-radius:6px;background:#fdfdfd"></div>
<div class="a" style="left:542.4px;top:764.700px;width:226.5px;height:33px;border:1px solid #8c8c8c;background:#e4e4e4"></div>
<div class="a" style="left:545.2px;top:767.200px;width:221.1px;height:28px;border:1.500px solid #585858;background:#f0f0f0"></div>
<div class="a" style="left:770.6px;top:764.700px;width:224.0px;height:33px;border:1px solid #8c8c8c;background:#e4e4e4"></div>
<div class="a" style="left:773.4px;top:767.200px;width:218.6px;height:28px;border:1.500px solid #585858;background:#f0f0f0"></div>
<div class="t r gc" style="left:663.400px;width:100px;top:771px;color:#9a9aa0;font-size:17.400px;letter-spacing:.2px">00:00</div>
<div class="t r gc" style="left:888px;width:100px;top:771px;color:#9a9aa0;font-size:17.400px;letter-spacing:.2px">00:00</div>
<svg class="a" style="left:0;top:430px" width="1939" height="32" viewBox="0 430 1939 32" fill="none">
<path d="M1212.2 434.5L1215.4 443.8L1225.2 444L1217.4 449.9L1220.3 459.3L1212.2 453.7L1204.1 459.3L1207 449.9L1199.2 444L1209 443.8Z" fill="#fcd58c" stroke="#f2a04e" stroke-width="1.4" stroke-linejoin="miter"/>
<path d="M1318.1 434.3L1321.4 443.7L1331.3 443.9L1323.4 449.9L1326.3 459.4L1318.1 453.8L1309.9 459.4L1312.8 449.9L1304.9 443.9L1314.8 443.7Z" fill="#a9dcb7" stroke="#1e8c4a" stroke-width="1.4" stroke-linejoin="miter"/>
<path d="M1394.9 434.3L1398.2 443.7L1408.1 443.9L1400.2 449.9L1403.1 459.4L1394.9 453.8L1386.7 459.4L1389.6 449.9L1381.7 443.9L1391.6 443.7Z" fill="#86c6f1" stroke="#1c5fa0" stroke-width="1.4" stroke-linejoin="miter"/>
<path d="M1474.3 437.5C1471.4 432.4 1462.7 432.4 1462.2 438.8C1462.2 445.3 1469 449.6 1474.3 454.3C1479.7 449.6 1486.5 445.3 1486.5 438.8C1486 432.4 1477.3 432.4 1474.3 437.5Z" fill="#f6b9bc" stroke="#ea666a" stroke-width="1.3" transform="rotate(9 1474.3 443.6)"/><path d="M1456.9 461.9C1456.9 454.6 1461.4 452.2 1465.9 452.2C1470.4 452.2 1474.9 454.6 1474.9 461.9Z" fill="#a9dcb7" stroke="#2fae60" stroke-width="1.5"/><circle cx="1465.9" cy="446.2" r="4.9" fill="#a9dcb7" stroke="#2fae60" stroke-width="1.5"/>
<path d="M1552.5 462.5C1552.5 452.1 1558.8 448.6 1565.1 448.6C1571.4 448.6 1577.7 452.1 1577.7 462.5Z" fill="#f9d98c" stroke="#f0a040" stroke-width="1.4"/><circle cx="1565.1" cy="439.8" r="7.5" fill="#f9d98c" stroke="#f0a040" stroke-width="1.4"/>
<path d="M1654.2 462.5C1654.2 452.1 1660.5 448.6 1666.8 448.6C1673.1 448.6 1679.4 452.1 1679.4 462.5Z" fill="#f6b7ba" stroke="#ea5a5e" stroke-width="1.4"/><circle cx="1666.8" cy="439.8" r="7.5" fill="#f6b7ba" stroke="#ea5a5e" stroke-width="1.4"/>
</svg>
<svg class="a" style="left:20px;top:505px" width="40" height="76" viewBox="20 505 40 76" fill="none">
<path d="M43.5 510.7L46.7 520L56.5 520.2L48.7 526.1L51.6 535.5L43.5 529.9L35.4 535.5L38.3 526.1L30.5 520.2L40.3 520Z" fill="#fcd58c" stroke="#f2a04e" stroke-width="1.4" stroke-linejoin="miter"/>
<path d="M43.5 549.4L46.8 559L57 559.2L48.9 565.4L51.8 575.1L43.5 569.3L35.2 575.1L38.1 565.4L30 559.2L40.2 559Z" fill="#a9dcb7" stroke="#1e8c4a" stroke-width="1.4" stroke-linejoin="miter"/>
</svg>
<svg class="a" style="left:221.1px;top:508.8px" width="30" height="28" viewBox="0 0 30 28" fill="none"><rect x="0.900" y="5" width="26.900" height="19.900" rx="1.500" fill="#fff" stroke="#9c9c9c" stroke-width="1.400"/><path d="M0.300 1.600Q0.300 0.600 1.300 0.600H13.400L16.600 3.300H27.400Q28.400 3.300 28.400 4.300V6.200H0.300Z" fill="#4d94d8"/><path d="M19.100 9.600h5.300M19.100 13.400h5.300M19.100 17.300h5.300M19.100 21.100h5.300" stroke="#b4b4b4" stroke-width="1.300"/><circle cx="11.300" cy="15.200" r="7.100" fill="#fff" stroke="#86c4ee" stroke-width="1.600"/><path d="M6.200 20.400L0.500 26.300" stroke="#6db6ea" stroke-width="1.800" stroke-linecap="round"/></svg>
<svg class="a" style="left:505.1px;top:508.8px" width="30" height="28" viewBox="0 0 30 28" fill="none"><rect x="0.900" y="5" width="26.900" height="19.900" rx="1.500" fill="#fff" stroke="#9c9c9c" stroke-width="1.400"/><path d="M0.300 1.600Q0.300 0.600 1.300 0.600H13.400L16.600 3.300H27.400Q28.400 3.300 28.400 4.300V6.200H0.300Z" fill="#4d94d8"/><path d="M19.100 9.600h5.300M19.100 13.400h5.300M19.100 17.300h5.300M19.100 21.100h5.300" stroke="#b4b4b4" stroke-width="1.300"/><circle cx="11.300" cy="15.200" r="7.100" fill="#fff" stroke="#86c4ee" stroke-width="1.600"/><path d="M6.200 20.400L0.500 26.300" stroke="#6db6ea" stroke-width="1.800" stroke-linecap="round"/></svg>
<svg class="a" style="left:1874px;top:510px" width="32" height="28" viewBox="0 0 32 28" fill="none" stroke="#6a6a6a" stroke-width="1.200" stroke-linejoin="round"><path d="M3.500 24.500L6 17.500L22.500 1.800Q24 0.600 25.500 2L27.500 4Q28.700 5.500 27.500 6.800L11 22.500Z"/><path d="M6 17.500L11 22.500M20.500 3.800L25.500 8.800M8 19.800L23 5.500"/></svg>


<div class="t" style="left:18px;top:799.500px;font-size:18.500px;font-weight:bold;color:#4a4a4a;left:18.3px;width:auto;margin-left:0;text-align:left;letter-spacing:0.29px">Détail du département</div>
<div class="a" style="left:224px;top:810px;width:1696px;height:2px;background:#6e6e6e"></div>
<div class="a" style="left:481px;top:822.5px;width:876px;height:35.5px;background:#f6f6f6"></div>
<div class="a" style="left:18.800px;top:856.800px;width:1901.200px;height:235.400px;border:2px solid #3b94d4;background:#fff"></div>
<div class="a" style="left:481px;top:822px;width:143px;height:36px;border:1px solid #5c5c5c;box-shadow:inset 0 0 0 1px rgba(92,92,92,.34)"></div>
<div class="t c gb" style="left:481px;width:141px;top:830px;left:500.7px;width:auto;margin-left:0;text-align:left;letter-spacing:0.11px">Depuis PRIM</div>
<div class="a" style="left:623px;top:822px;width:188px;height:36px;border:1px solid #5c5c5c;box-shadow:inset 0 0 0 1px rgba(92,92,92,.34)"></div>
<div class="a" style="left:810px;top:822px;width:110px;height:36px;border:1px solid #5c5c5c;box-shadow:inset 0 0 0 1px rgba(92,92,92,.34)"></div>
<div class="a" style="left:919px;top:822px;width:110px;height:36px;border:1px solid #5c5c5c;box-shadow:inset 0 0 0 1px rgba(92,92,92,.34)"></div>
<div class="a" style="left:1028px;top:822px;width:111px;height:36px;border:1px solid #5c5c5c;box-shadow:inset 0 0 0 1px rgba(92,92,92,.34)"></div>
<div class="a" style="left:1138px;top:822px;width:110px;height:36px;border:1px solid #5c5c5c;box-shadow:inset 0 0 0 1px rgba(92,92,92,.34)"></div>
<div class="a" style="left:1248.300px;top:823.300px;width:107.500px;height:1.200px;background:#cdcdcd"></div>
<div class="a" style="left:1356px;top:828px;width:1px;height:30px;background:#5c5c5c;box-shadow:0 0 0 1px rgba(92,92,92,.3)"></div>
<div class="a" style="left:20.800px;top:858.800px;width:1870px;height:39px;background:#f5f5f5"></div>
<div class="a" style="left:23px;top:861px;width:240px;height:36.500px;background:linear-gradient(#fcfcfc,#f0f0f0);border:1px solid #c2c2c2;border-left-color:#d4d4d4;border-top-color:#dadada;border-bottom-color:#bababa"></div>
<div class="t gt" style="left:28px;top:869.500px;left:27.8px;width:auto;margin-left:0;text-align:left;letter-spacing:-0.24px">Département</div>
<div class="a" style="left:264px;top:861px;width:175px;height:36.500px;background:linear-gradient(#fcfcfc,#f0f0f0);border:1px solid #c2c2c2;border-left-color:#d4d4d4;border-top-color:#dadada;border-bottom-color:#bababa"></div>
<div class="t r gt" style="left:263px;width:168px;top:869.500px;left:296.3px;width:auto;margin-left:0;text-align:left;letter-spacing:-0.03px">Heures effectuées</div>
<div class="a" style="left:440px;top:861px;width:41px;height:36.500px;background:linear-gradient(#fcfcfc,#f0f0f0);border:1px solid #c2c2c2;border-left-color:#d4d4d4;border-top-color:#dadada;border-bottom-color:#bababa"></div>
<div class="a" style="left:482px;top:861px;width:140px;height:36.500px;background:linear-gradient(#fcfcfc,#f0f0f0);border:1px solid #c2c2c2;border-left-color:#d4d4d4;border-top-color:#dadada;border-bottom-color:#bababa"></div>
<div class="t gt" style="left:487px;top:869.500px;left:488.7px;width:auto;margin-left:0;text-align:left;letter-spacing:-0.14px">Dernière pr...</div>
<div class="a" style="left:623px;top:861px;width:78px;height:36.500px;background:linear-gradient(#fcfcfc,#f0f0f0);border:1px solid #c2c2c2;border-left-color:#d4d4d4;border-top-color:#dadada;border-bottom-color:#bababa"></div>
<div class="t r gt" style="left:622px;width:71px;top:869.500px;left:645.2px;width:auto;margin-left:0;text-align:left;letter-spacing:-0.59px">Priorité</div>
<div class="a" style="left:702px;top:861px;width:108px;height:36.500px;background:linear-gradient(#fcfcfc,#f0f0f0);border:1px solid #c2c2c2;border-left-color:#d4d4d4;border-top-color:#dadada;border-bottom-color:#bababa"></div>
<div class="t c gt" style="left:701px;width:109px;top:869.500px;left:732.5px;width:auto;margin-left:0;text-align:left;letter-spacing:-0.30px">Favori</div>
<div class="a" style="left:811px;top:861px;width:108px;height:36.500px;background:linear-gradient(#fcfcfc,#f0f0f0);border:1px solid #c2c2c2;border-left-color:#d4d4d4;border-top-color:#dadada;border-bottom-color:#bababa"></div>
<div class="t c gt" style="left:810px;width:109px;top:869.500px;left:845.6px;width:auto;margin-left:0;text-align:left;letter-spacing:-0.46px">Aime</div>
<div class="a" style="left:920px;top:861px;width:108px;height:36.500px;background:linear-gradient(#fcfcfc,#f0f0f0);border:1px solid #c2c2c2;border-left-color:#d4d4d4;border-top-color:#dadada;border-bottom-color:#bababa"></div>
<div class="t c gt" style="left:919px;width:109px;top:869.500px;left:944.9px;width:auto;margin-left:0;text-align:left;letter-spacing:-0.15px">Connait</div>
<div class="a" style="left:1029px;top:861px;width:109px;height:36.500px;background:linear-gradient(#fcfcfc,#f0f0f0);border:1px solid #c2c2c2;border-left-color:#d4d4d4;border-top-color:#dadada;border-bottom-color:#bababa"></div>
<div class="t c gt" style="left:1028px;width:110px;top:869.500px;left:1053.6px;width:auto;margin-left:0;text-align:left;letter-spacing:-0.49px">Aimerait</div>
<div class="a" style="left:1139px;top:861px;width:109px;height:36.500px;background:linear-gradient(#fcfcfc,#f0f0f0);border:1px solid #c2c2c2;border-left-color:#d4d4d4;border-top-color:#dadada;border-bottom-color:#bababa"></div>
<div class="t c gt" style="left:1138px;width:110px;top:869.500px;left:1147.7px;width:auto;margin-left:0;text-align:left;letter-spacing:0.09px">Ne veut pas</div>
<div class="a" style="left:1249px;top:861px;width:108px;height:36.500px;background:linear-gradient(#fcfcfc,#f0f0f0);border:1px solid #c2c2c2;border-left-color:#d4d4d4;border-top-color:#dadada;border-bottom-color:#bababa"></div>
<div class="t c gt" style="left:1248px;width:109px;top:869.500px;left:1261.7px;width:auto;margin-left:0;text-align:left;letter-spacing:-0.18px">Non désiré</div>
<div class="a" style="left:1358px;top:859px;width:1532px;height:38.500px;background:#f8f8f8;border-bottom:2px solid #cfcfcf"></div>
<svg class="a" style="left:598.200px;top:876px" width="14" height="8" viewBox="0 0 14 8"><path d="M0.500 7.500h13L7 0.500z" fill="#6a6a6a"/></svg>
<div class="hl" style="left:21px;top:936.2px;width:1870px"></div>
<div class="hl" style="left:21px;top:975.4px;width:1870px"></div>
<div class="hl" style="left:21px;top:1014.6px;width:1870px"></div>
<div class="hl" style="left:21px;top:1053.7px;width:1870px"></div>
<div class="vl" style="left:263.6px;top:898px;height:192px"></div>
<div class="vl" style="left:439.6px;top:898px;height:192px"></div>
<div class="vl" style="left:481.8px;top:898px;height:192px"></div>
<div class="vl" style="left:623.6px;top:898px;height:192px"></div>
<div class="vl" style="left:701.8px;top:898px;height:192px"></div>
<div class="vl" style="left:810.6px;top:898px;height:192px"></div>
<div class="vl" style="left:919.8px;top:898px;height:192px"></div>
<div class="vl" style="left:1029.3px;top:898px;height:192px"></div>
<div class="vl" style="left:1138.9px;top:898px;height:192px"></div>
<div class="vl" style="left:1248.5px;top:898px;height:192px"></div>
<div class="vl" style="left:1357.7px;top:898px;height:192px"></div>
<div class="a" style="left:1890px;top:858.800px;width:28px;height:231.400px;background:#f0f0f0"></div>
<div class="a" style="left:1897.500px;top:917px;width:12.500px;height:117.500px;border-radius:6.500px;background:#c6c6c6"></div>
<svg class="a" style="left:1895px;top:869px" width="16" height="10" viewBox="0 0 16 10"><path d="M1 9h14.600L8.300 0.800z" fill="#6a6a6a"/></svg>
<svg class="a" style="left:1895px;top:1072.500px" width="16" height="10" viewBox="0 0 16 10"><path d="M1 0.500h14.600L8.300 8.900z" fill="#6a6a6a"/></svg>
<div class="t" style="left:61px;top:908.8px;color:#3c3c44;font-size:17px">Département 1</div>
<div class="t r" style="left:328.500px;width:100px;top:908.8px;color:#3c3c44;font-size:17px">00:00</div>
<div class="t c" style="left:735px;width:40px;top:908.6px;font-size:15.500px;color:#3a3a3a">X</div>
<div class="t" style="left:61px;top:947.9px;color:#3c3c44;font-size:17px">Département 2</div>
<div class="t r" style="left:328.500px;width:100px;top:947.9px;color:#3c3c44;font-size:17px">00:00</div>
<div class="t c" style="left:1281px;width:40px;top:947.7px;font-size:15.500px;color:#3a3a3a">X</div>
<div class="t" style="left:61px;top:987.1px;color:#3c3c44;font-size:17px">Département 3</div>
<div class="t r" style="left:328.500px;width:100px;top:987.1px;color:#3c3c44;font-size:17px">00:00</div>
<div class="t c" style="left:1062px;width:40px;top:986.9px;font-size:15.500px;color:#3a3a3a">X</div>
<div class="t" style="left:61px;top:1026.2px;color:#3c3c44;font-size:17px">Département 4</div>
<div class="t r" style="left:328.500px;width:100px;top:1026.2px;color:#3c3c44;font-size:17px">00:00</div>
<div class="t c" style="left:1172px;width:40px;top:1026.0px;font-size:15.500px;color:#3a3a3a">X</div>
<div class="t" style="left:61px;top:1065.4px;color:#3c3c44;font-size:17px">Département 5</div>
<div class="t r" style="left:328.500px;width:100px;top:1065.4px;color:#3c3c44;font-size:17px">00:00</div>
<div class="t c" style="left:844px;width:40px;top:1065.2px;font-size:15.500px;color:#3a3a3a">X</div>
<div class="t r" style="left:642px;width:50px;top:908.600px;color:#3a3a3a;font-size:15.500px">1</div>
<svg class="a" style="left:0;top:823px" width="1939" height="33" viewBox="0 823 1939 33" fill="none">
<path d="M716.8 828.5L720 837.8L729.8 838L722 843.9L724.9 853.3L716.8 847.7L708.7 853.3L711.6 843.9L703.8 838L713.6 837.8Z" fill="#fcd58c" stroke="#f2a04e" stroke-width="1.4" stroke-linejoin="miter"/>
<path d="M864.9 828.3L868.2 837.7L878.1 837.9L870.2 843.9L873.1 853.4L864.9 847.8L856.7 853.4L859.6 843.9L851.7 837.9L861.6 837.7Z" fill="#a9dcb7" stroke="#1e8c4a" stroke-width="1.4" stroke-linejoin="miter"/>
<path d="M974 828.3L977.3 837.7L987.2 837.9L979.3 843.9L982.2 853.4L974 847.8L965.8 853.4L968.7 843.9L960.8 837.9L970.7 837.7Z" fill="#86c6f1" stroke="#1c5fa0" stroke-width="1.4" stroke-linejoin="miter"/>
<path d="M1087 831.6C1084.1 826.5 1075.4 826.5 1074.9 832.9C1074.9 839.4 1081.7 843.7 1087 848.4C1092.4 843.7 1099.2 839.4 1099.2 832.9C1098.7 826.5 1090 826.5 1087 831.6Z" fill="#f6b9bc" stroke="#ea666a" stroke-width="1.3" transform="rotate(9 1087 837.6)"/><path d="M1069.6 856C1069.6 848.7 1074.1 846.3 1078.6 846.3C1083.1 846.3 1087.6 848.7 1087.6 856Z" fill="#a9dcb7" stroke="#2fae60" stroke-width="1.5"/><circle cx="1078.6" cy="840.3" r="4.9" fill="#a9dcb7" stroke="#2fae60" stroke-width="1.5"/>
<path d="M1180.4 856.5C1180.4 845.5 1186.7 841.8 1193 841.8C1199.3 841.8 1205.6 845.5 1205.6 856.5Z" fill="#f9d98c" stroke="#f0a040" stroke-width="1.4"/><circle cx="1193" cy="833" r="7.5" fill="#f9d98c" stroke="#f0a040" stroke-width="1.4"/>
<path d="M1290 856.5C1290 845.5 1296.3 841.8 1302.6 841.8C1308.9 841.8 1315.2 845.5 1315.2 856.5Z" fill="#f6b7ba" stroke="#ea5a5e" stroke-width="1.4"/><circle cx="1302.6" cy="833" r="7.5" fill="#f6b7ba" stroke="#ea5a5e" stroke-width="1.4"/>
</svg>
<svg class="a" style="left:20px;top:899px" width="42" height="191" viewBox="20 899 42 191" fill="none">
<path d="M43.2 905L46.4 914.3L56.2 914.5L48.4 920.4L51.3 929.8L43.2 924.2L35.1 929.8L38 920.4L30.2 914.5L40 914.3Z" fill="#fcd58c" stroke="#f2a04e" stroke-width="1.4" stroke-linejoin="miter"/>
<path d="M30.9 970.2C30.9 960.9 37.2 957.8 43.5 957.8C49.8 957.8 56.1 960.9 56.1 970.2Z" fill="#f6b7ba" stroke="#ea5a5e" stroke-width="1.4"/><circle cx="43.5" cy="949" r="7.5" fill="#f6b7ba" stroke="#ea5a5e" stroke-width="1.4"/>
<path d="M46.6 986.2C43.7 981.1 35 981.1 34.5 987.5C34.5 994 41.3 998.3 46.6 1003C52 998.3 58.8 994 58.8 987.5C58.3 981.1 49.6 981.1 46.6 986.2Z" fill="#f6b9bc" stroke="#ea666a" stroke-width="1.3" transform="rotate(9 46.6 992.2)"/><path d="M29.2 1010.6C29.2 1003.3 33.7 1000.9 38.2 1000.9C42.7 1000.9 47.2 1003.3 47.2 1010.6Z" fill="#a9dcb7" stroke="#2fae60" stroke-width="1.5"/><circle cx="38.2" cy="994.9" r="4.9" fill="#a9dcb7" stroke="#2fae60" stroke-width="1.5"/>
<path d="M30.9 1048.8C30.9 1039.2 37.2 1036 43.5 1036C49.8 1036 56.1 1039.2 56.1 1048.8Z" fill="#f9d98c" stroke="#f0a040" stroke-width="1.4"/><circle cx="43.5" cy="1027.2" r="7.5" fill="#f9d98c" stroke="#f0a040" stroke-width="1.4"/>
<path d="M43.2 1060.4L46.5 1070L56.7 1070.2L48.6 1076.4L51.5 1086.1L43.2 1080.3L34.9 1086.1L37.8 1076.4L29.7 1070.2L39.9 1070Z" fill="#a9dcb7" stroke="#1e8c4a" stroke-width="1.4" stroke-linejoin="miter"/>
</svg>
<div class="a" style="left:443.500px;top:860.900px;width:36.400px;height:35.600px;border:1.200px solid #d0d0d0;border-radius:6px;background:#fff"></div>
<svg class="a" style="left:448px;top:863.5px" width="30" height="28" viewBox="0 0 30 28" fill="none"><rect x="0.900" y="5" width="26.900" height="19.900" rx="1.500" fill="#fff" stroke="#9c9c9c" stroke-width="1.400"/><path d="M0.300 1.600Q0.300 0.600 1.300 0.600H13.400L16.600 3.300H27.400Q28.400 3.300 28.400 4.300V6.200H0.300Z" fill="#4d94d8"/><path d="M19.100 9.600h5.300M19.100 13.400h5.300M19.100 17.300h5.300M19.100 21.100h5.300" stroke="#b4b4b4" stroke-width="1.300"/><circle cx="11.300" cy="15.200" r="7.100" fill="#fff" stroke="#86c4ee" stroke-width="1.600"/><path d="M6.200 20.400L0.500 26.300" stroke="#6db6ea" stroke-width="1.800" stroke-linecap="round"/></svg>


<svg class="a" style="left:683.3px;top:928.9px" width="66" height="66" viewBox="-33 -33 66 66"><circle r="29.200" fill="#3f93b4" stroke="#1f4e79" stroke-width="3.400"/><text x="0.300" y="17.300" text-anchor="middle" font-family="Liberation Sans, sans-serif" font-weight="bold" font-size="38" fill="#fff">4</text></svg>
<svg class="a" style="left:828.8px;top:998.0px" width="66" height="66" viewBox="-33 -33 66 66"><circle r="29.200" fill="#3f93b4" stroke="#1f4e79" stroke-width="3.400"/><text x="0.300" y="17.300" text-anchor="middle" font-family="Liberation Sans, sans-serif" font-weight="bold" font-size="38" fill="#fff">3</text></svg>
<svg class="a" style="left:1157.0px;top:954.8px" width="66" height="66" viewBox="-33 -33 66 66"><circle r="29.200" fill="#3f93b4" stroke="#1f4e79" stroke-width="3.400"/><text x="0.300" y="17.300" text-anchor="middle" font-family="Liberation Sans, sans-serif" font-weight="bold" font-size="38" fill="#fff">5</text></svg>
<svg class="a" style="left:1270.2px;top:967.2px" width="66" height="66" viewBox="-33 -33 66 66"><circle r="29.200" fill="#3f93b4" stroke="#1f4e79" stroke-width="3.400"/><text x="0.300" y="17.300" text-anchor="middle" font-family="Liberation Sans, sans-serif" font-weight="bold" font-size="38" fill="#fff">2</text></svg>
<svg class="a" style="left:1045.0px;top:1013.2px" width="66" height="66" viewBox="-33 -33 66 66"><circle r="29.200" fill="#3f93b4" stroke="#1f4e79" stroke-width="3.400"/><text x="0.300" y="17.300" text-anchor="middle" font-family="Liberation Sans, sans-serif" font-weight="bold" font-size="38" fill="#fff">1</text></svg>

<div class="cr" style="left:1.400px;top:56px;width:2px;height:1054px"></div><div class="cr" style="left:1935px;top:56px;width:2px;height:1054px"></div><div class="cr" style="left:1.400px;top:1108.500px;width:1936px;height:1.500px"></div>
<div class="a" style="left:3.400px;top:254px;width:1.300px;height:855px;background:#f0f0f0"></div><div class="a" style="left:1933px;top:254px;width:2px;height:855px;background:#f0f0f0"></div>
<div id="bl"></div><div id="br"></div><div id="bt"></div><div id="bb"></div>
</div>
</body>
</html>
